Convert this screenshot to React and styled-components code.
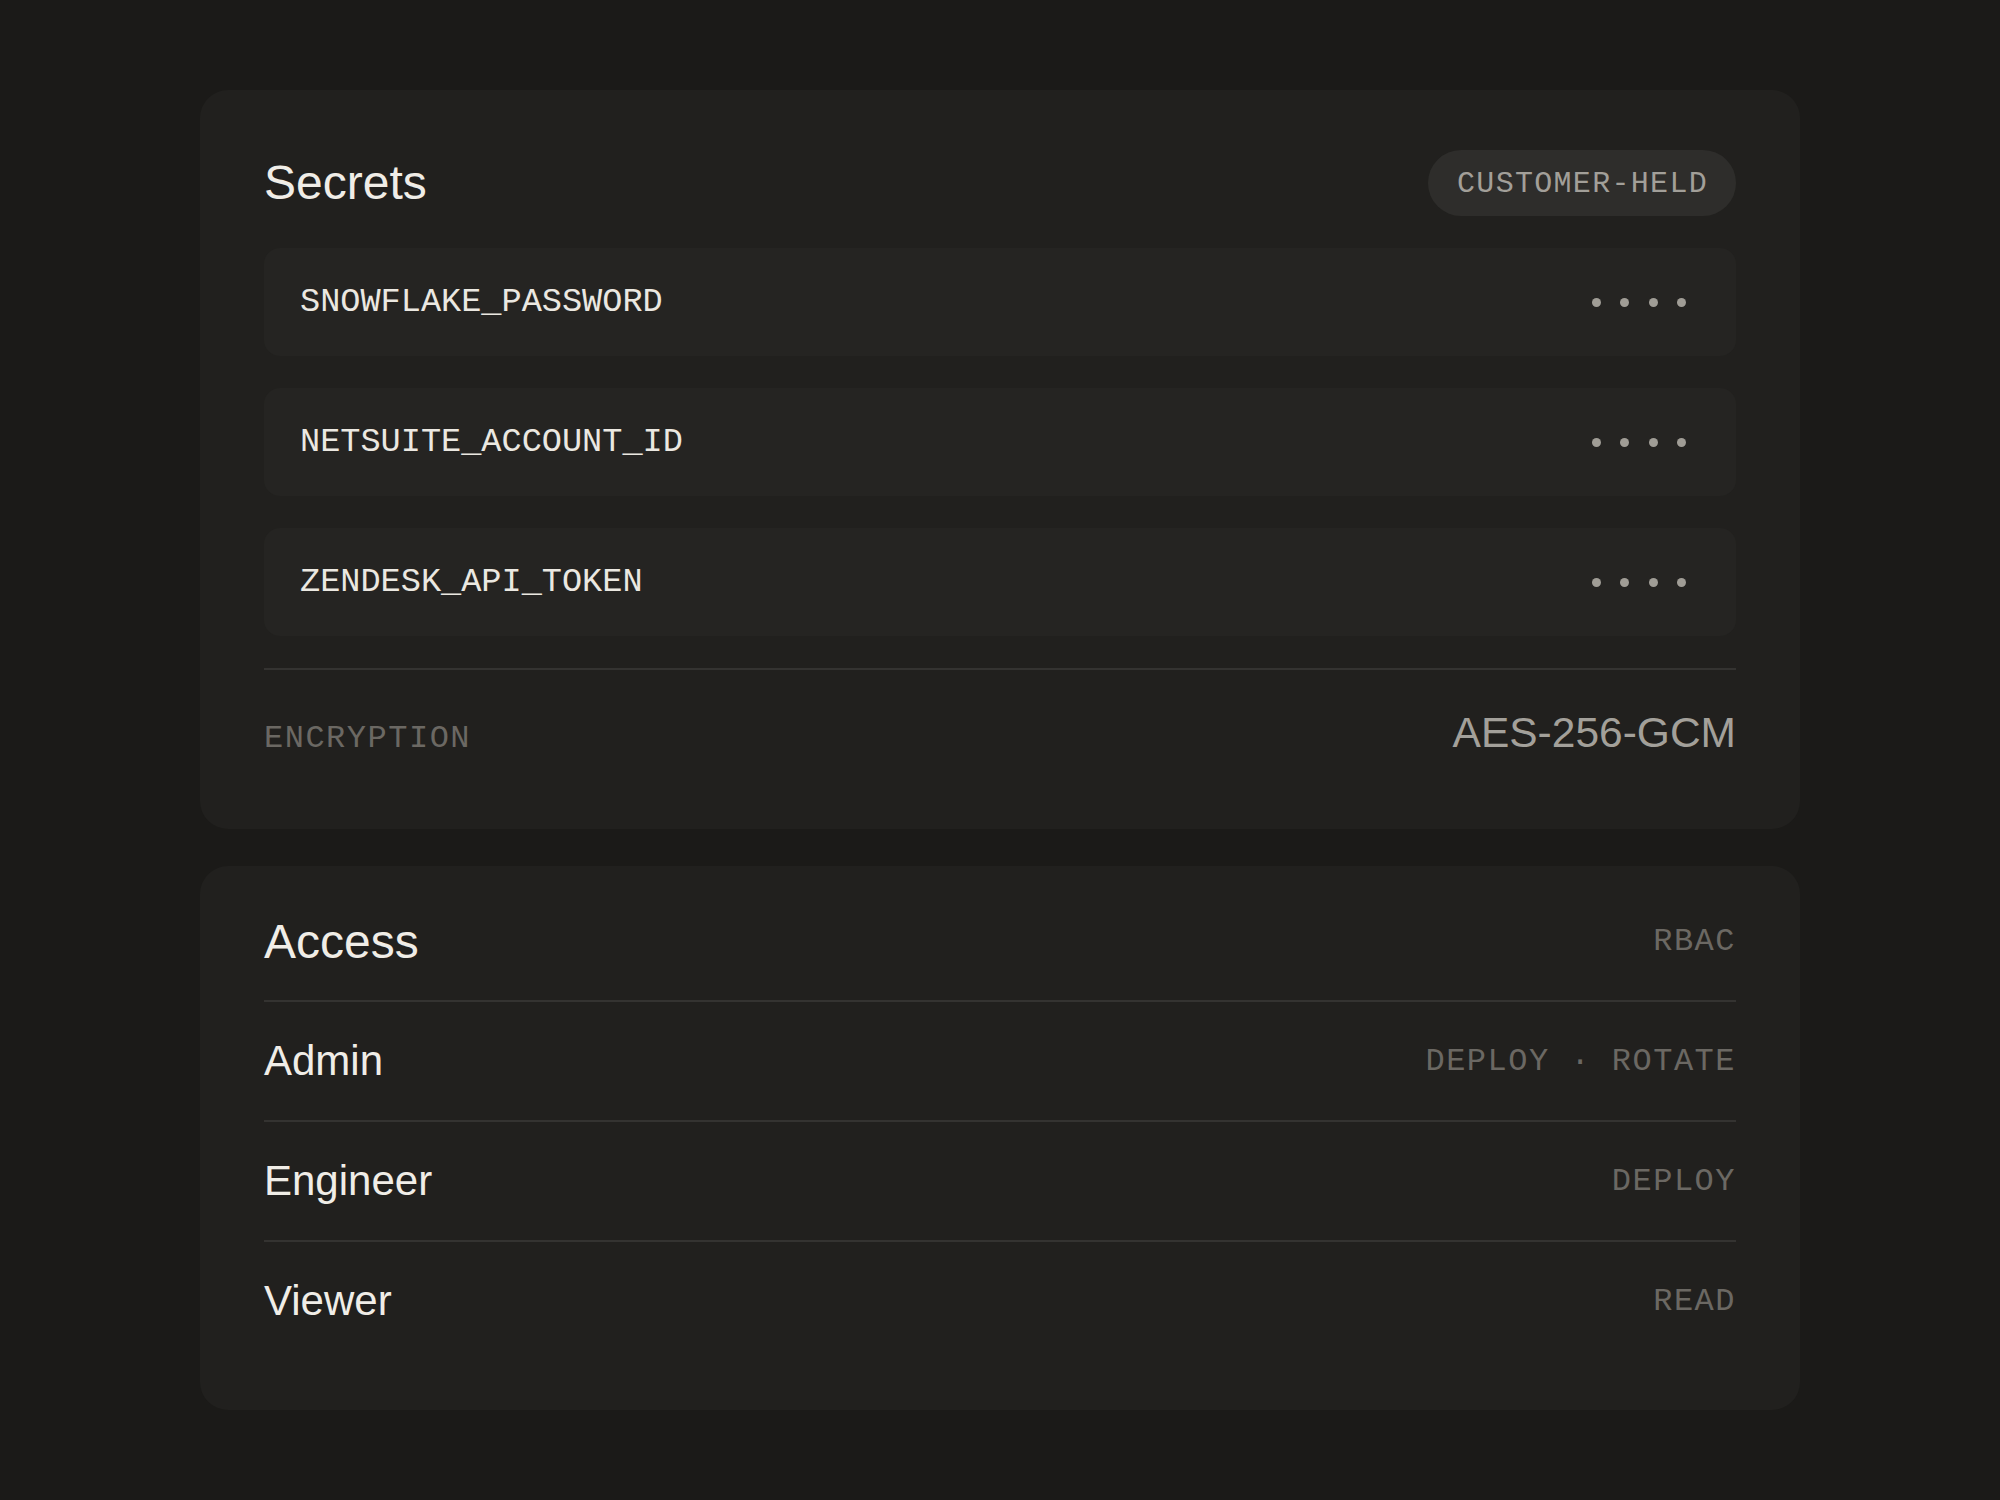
import React from 'react'
import styled, { createGlobalStyle } from 'styled-components'

const secrets = ['SNOWFLAKE_PASSWORD', 'NETSUITE_ACCOUNT_ID', 'ZENDESK_API_TOKEN']

const roles = [
  { name: 'Admin', perms: 'DEPLOY · ROTATE' },
  { name: 'Engineer', perms: 'DEPLOY' },
  { name: 'Viewer', perms: 'READ' }
]

function App () {
  return (
    <>
      <GlobalStyle />
      <Page>
        <Card $top={60} $bottom={47}>
          <CardHeader>
            <Title>Secrets</Title>
            <Pill>CUSTOMER-HELD</Pill>
          </CardHeader>

          {secrets.map(key => (
            <SecretRow key={key}>
              <SecretName>{key}</SecretName>
              <Dots>
                <Dot /><Dot /><Dot /><Dot />
              </Dots>
            </SecretRow>
          ))}

          <Footer>
            <Label>ENCRYPTION</Label>
            <Value>AES-256-GCM</Value>
          </Footer>
        </Card>

        <Card $top={48} $bottom={50} $gap={0}>
          <AccessHeader>
            <Title>Access</Title>
            <Label>RBAC</Label>
          </AccessHeader>

          {roles.map(role => (
            <RoleRow key={role.name}>
              <RoleName>{role.name}</RoleName>
              <Label>{role.perms}</Label>
            </RoleRow>
          ))}
        </Card>
      </Page>
    </>
  )
}

export default App

const GlobalStyle = createGlobalStyle`
  html, body {
    margin: 0;
    padding: 0;
    background: #1b1a18;
  }
  body {
    font-family: 'Liberation Sans', Arial, sans-serif;
    color: #efece6;
    -webkit-font-smoothing: antialiased;
  }
`

const Page = styled.div`
  min-height: 1500px;
  box-sizing: border-box;
  padding: 90px 200px;
  display: flex;
  flex-direction: column;
  gap: 37px;
`

const Card = styled.section`
  background: #21201e;
  border-radius: 28px;
  padding: ${p => p.$top}px 64px ${p => p.$bottom}px;
  display: flex;
  flex-direction: column;
  gap: ${p => (p.$gap ?? 32)}px;
`

const CardHeader = styled.div`
  display: flex;
  align-items: center;
  justify-content: space-between;
  height: 66px;
`

const Title = styled.h2`
  margin: 0;
  font-size: 48px;
  font-weight: 400;
  line-height: 1.15;
  color: #f0ede7;
`

const Pill = styled.span`
  display: inline-flex;
  align-items: center;
  height: 66px;
  padding: 2px 28px 0 29px;
  box-sizing: border-box;
  border-radius: 33px;
  background: #2e2d2b;
  font-family: 'Liberation Mono', monospace;
  font-size: 30px;
  letter-spacing: 1.3px;
  color: #a29f99;
`

const SecretRow = styled.div`
  display: flex;
  align-items: center;
  justify-content: space-between;
  height: 108px;
  padding: 0 36px;
  border-radius: 16px;
  background: #252422;
`

const SecretName = styled.span`
  font-family: 'Liberation Mono', monospace;
  font-size: 33.6px;
  color: #ebe8e1;
`

const Dots = styled.div`
  display: flex;
  gap: 19.5px;
  padding-right: 14px;
`

const Dot = styled.span`
  width: 9px;
  height: 9px;
  border-radius: 50%;
  background: #a09d96;
`

const Footer = styled.div`
  display: flex;
  align-items: baseline;
  justify-content: space-between;
  border-top: 2px solid #343331;
  padding: 39px 0 24px;
`

const Label = styled.span`
  font-family: 'Liberation Mono', monospace;
  font-size: 32px;
  letter-spacing: 1.5px;
  color: #6b6863;
  white-space: pre;
`

const Value = styled.span`
  font-size: 42.5px;
  line-height: 1.15;
  color: #a3a09a;
`

const AccessHeader = styled.div`
  display: flex;
  align-items: center;
  justify-content: space-between;
  padding-bottom: 31px;
  border-bottom: 2px solid #343331;
`

const RoleRow = styled.div`
  display: flex;
  align-items: center;
  justify-content: space-between;
  height: 118px;

  & + & {
    border-top: 2px solid #343331;
  }
`

const RoleName = styled.span`
  font-size: 42px;
  color: #f0ede7;
`
